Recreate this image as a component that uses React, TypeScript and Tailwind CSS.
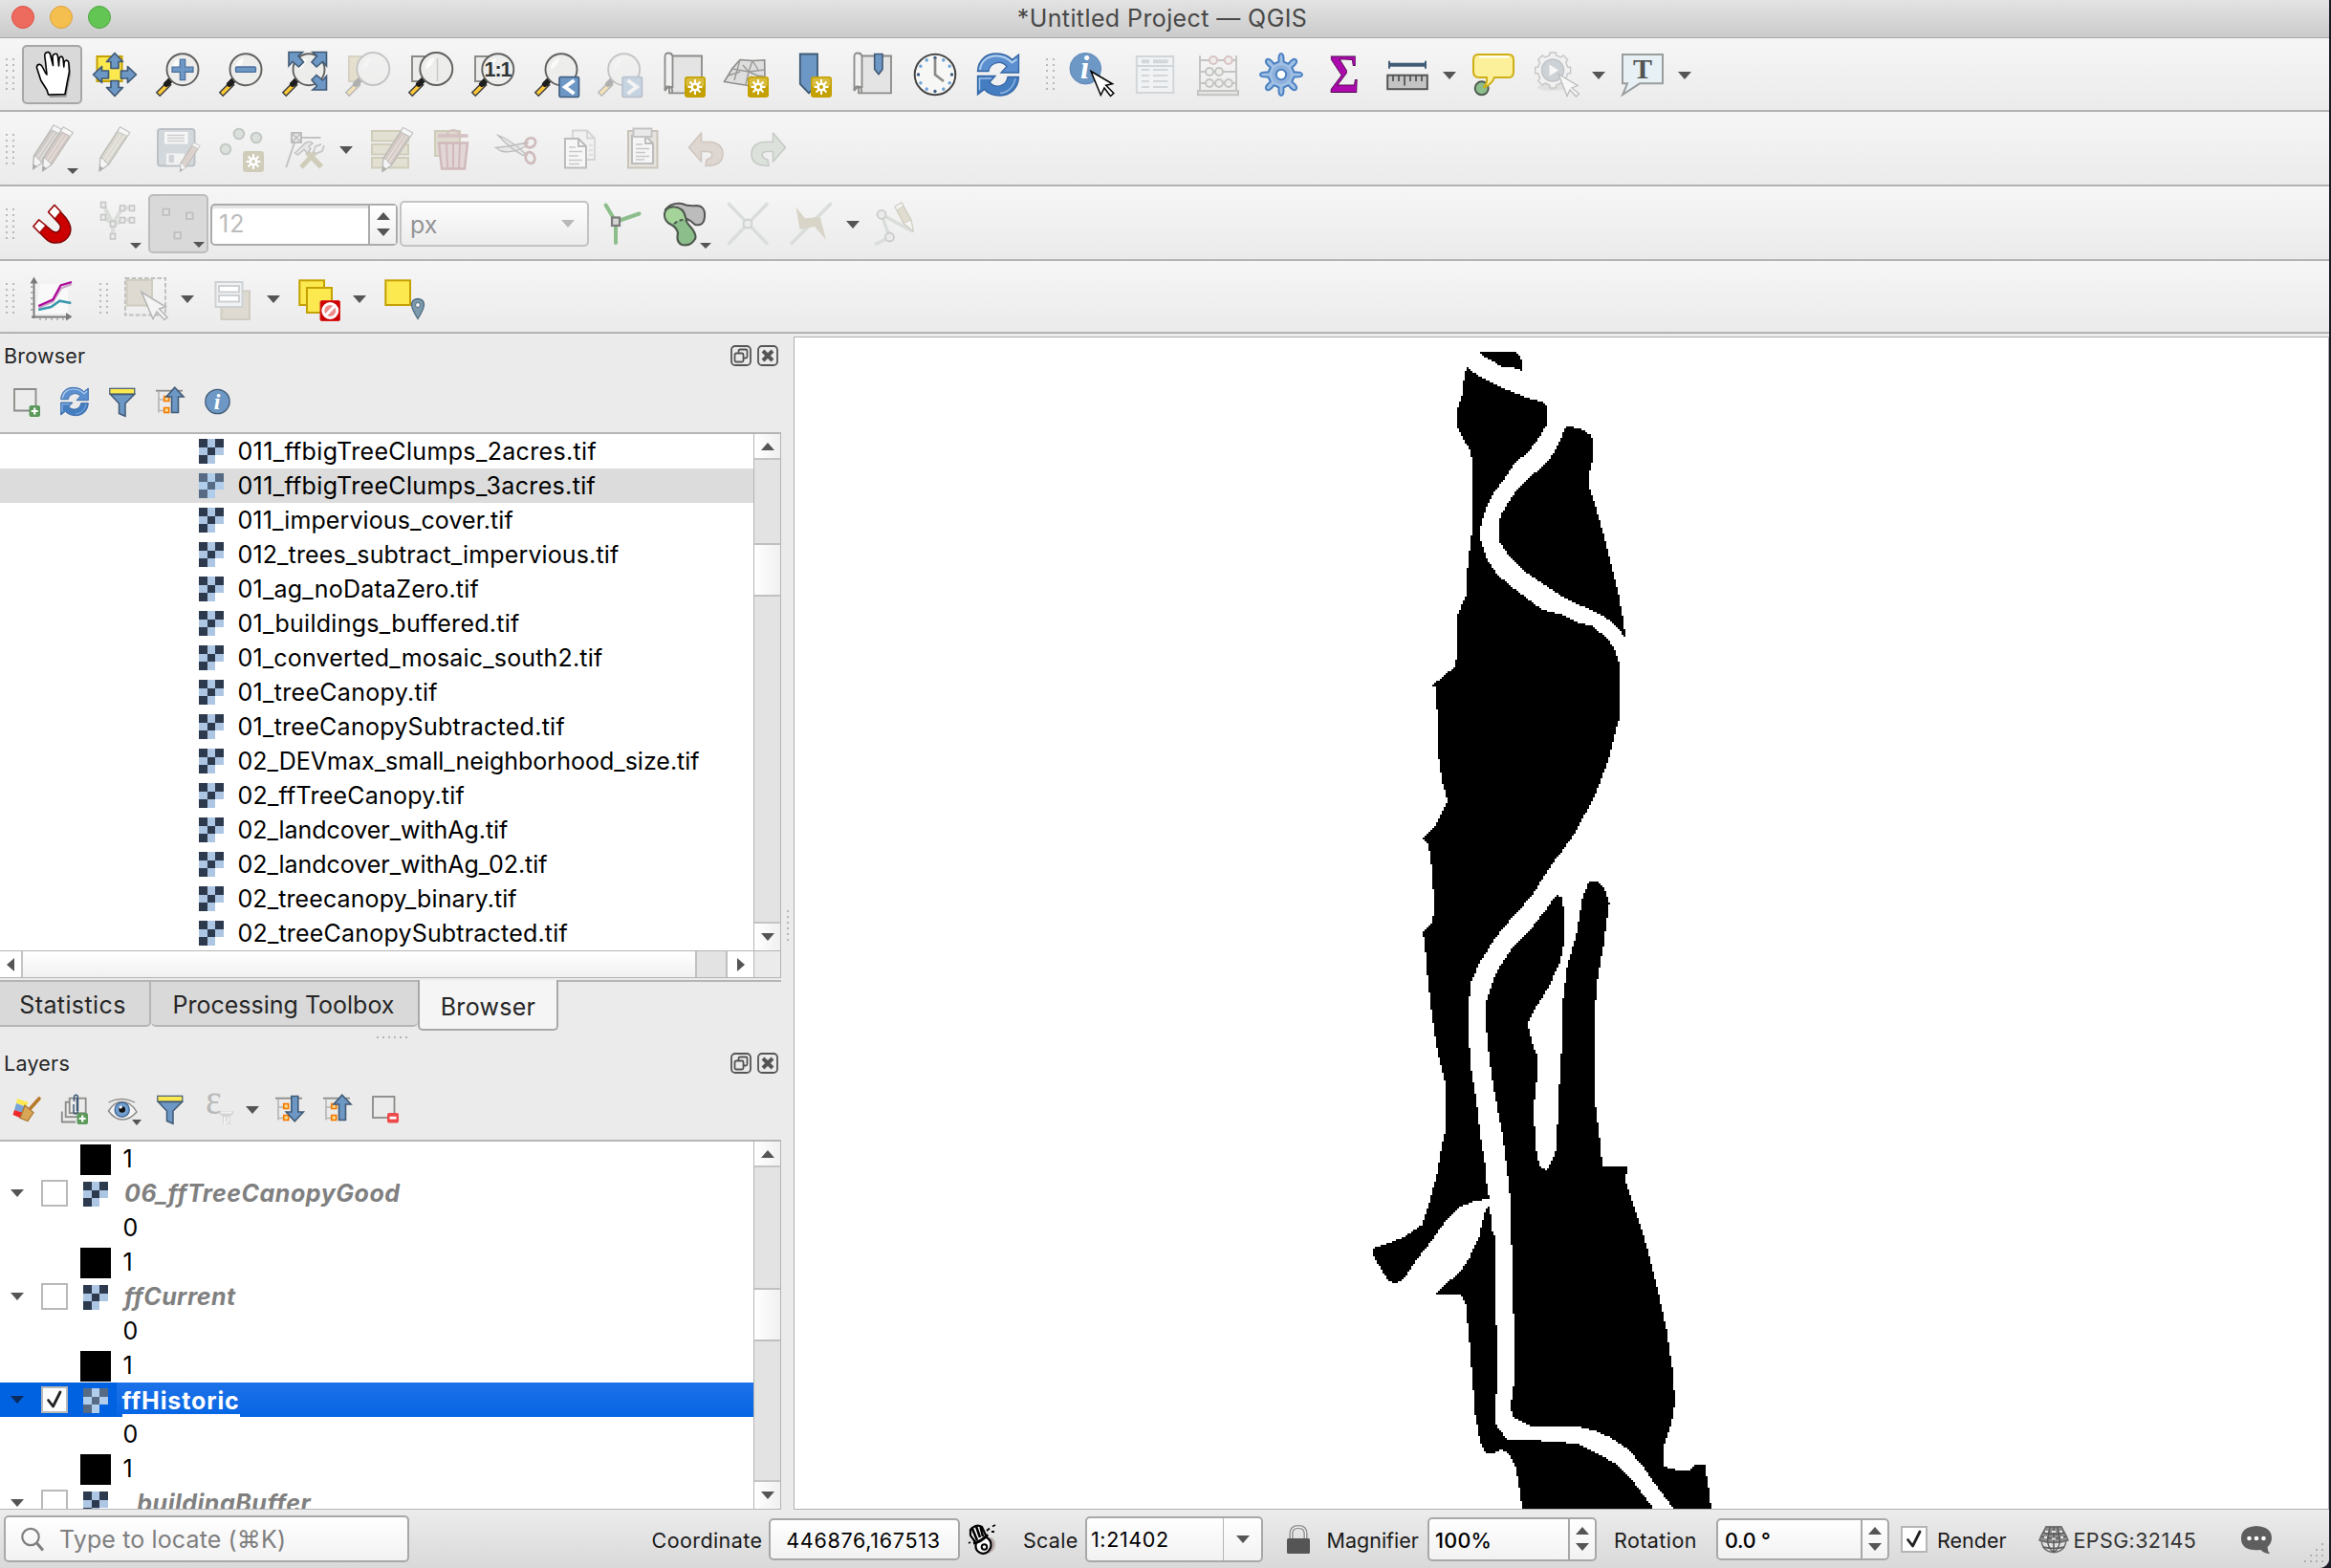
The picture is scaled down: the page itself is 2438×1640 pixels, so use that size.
import React from "react";

type Kids = { children?: React.ReactNode };

/* ---------- shared bits ---------- */

const Svg = ({ children, className = "" }: Kids & { className?: string }) => (
  <svg viewBox="0 0 48 48" className={`block h-12 w-12 shrink-0 overflow-visible ${className}`} fill="none">
    {children}
  </svg>
);

const Small = ({ children }: Kids) => (
  <svg viewBox="0 0 32 32" className="block h-8 w-8 shrink-0 overflow-visible" fill="none">
    {children}
  </svg>
);

const Down = ({ className = "border-t-[#555]" }: { className?: string }) => (
  <span className={`block h-0 w-0 border-x-[7.5px] border-t-[8.5px] border-x-transparent ${className}`} />
);
const Up = () => (
  <span className="block h-0 w-0 border-x-[7.5px] border-b-[8.5px] border-x-transparent border-b-[#555]" />
);

const Cell = ({ children }: Kids) => (
  <div className="relative flex h-[62px] w-[66px] shrink-0 items-center justify-center">{children}</div>
);

const Drop = () => (
  <div className="flex h-[62px] w-6 shrink-0 items-center justify-start pt-[2px] pl-[3.5px]">
    <Down />
  </div>
);

const Mini = () => (
  <span className="absolute right-[5px] bottom-[5px] block h-0 w-0 border-x-[6px] border-t-[6.5px] border-x-transparent border-t-[#555]" />
);

const Pressed = ({ children, dim }: Kids & { dim?: boolean }) => (
  <div className="flex w-[66px] shrink-0 justify-center">
    <div
      className={`relative flex h-[62px] w-[63px] items-center justify-center rounded-[5px] border-2 bg-[#d9d9d9] ${
        dim ? "border-[#bdbdbd]" : "border-[#a6a6a6]"
      }`}
    >
      {children}
    </div>
  </div>
);

const Handle = ({ className = "" }: { className?: string }) => (
  <div className={`flex shrink-0 gap-[5px] ${className}`}>
    {[0, 1].map((c) => (
      <div key={c} className="flex flex-col gap-[4.2px]">
        {[0, 1, 2, 3, 4, 5].map((r) => (
          <span key={r} className="block h-[2px] w-[2px] bg-[#b9b9b9]" />
        ))}
      </div>
    ))}
  </div>
);

const Bar = ({ children, className = "" }: Kids & { className?: string }) => (
  <div
    className={`flex shrink-0 items-center border-b-2 border-[#b2b2b2] bg-gradient-to-b from-[#f6f6f6] to-[#ebebeb] ${className}`}
  >
    {children}
  </div>
);

/* ---------- icon parts ---------- */

const Mag = ({ cx = 29, cy = 18.7, r = 16.5 }: { cx?: number; cy?: number; r?: number }) => (
  <>
    <path d="M15.5 32.5 L3 45" stroke="#3f3f3f" strokeWidth="6.4" />
    <path d="M13 35 L4 44" stroke="#fcc938" strokeWidth="3.4" />
    <path d="M17.5 28.5 L12 34" stroke="#1d1d1d" strokeWidth="6" strokeLinecap="round" />
    <circle cx={cx} cy={cy} r={r} fill="#ededec" stroke="#60605e" strokeWidth="1.9" />
    <path
      d={`M${cx - 11} ${cy} A 11.5 11.5 0 0 1 ${cx - 2} ${cy - 12} C ${cx - 3} ${cy - 6} ${cx - 6} ${cy - 2} ${cx - 11} ${cy} Z`}
      fill="#fff"
      opacity=".75"
    />
  </>
);

const Spark = () => (
  <g>
    <rect x="26" y="26" width="22" height="22" rx="3" fill="#c4a000" />
    <rect x="27.5" y="27.5" width="19" height="9" rx="2" fill="#d8bc3c" />
    <path d="M37 29 V45 M29.5 37 H44.5 M31.5 31.5 L42.5 42.5 M42.5 31.5 L31.5 42.5" stroke="#fff" strokeWidth="2" />
    <circle cx="37" cy="37" r="4.6" fill="#fff" />
    <circle cx="37" cy="37" r="2" fill="#c4a000" />
  </g>
);

const Cursor = ({ x, y }: { x: number; y: number }) => (
  <path
    transform={`translate(${x} ${y})`}
    d="M0 0 L22.5 13.3 L15.7 14.8 L23.8 23 L20.5 26 L14 17.5 L10.3 25 Z"
    fill="#fff"
    stroke="#000"
    strokeWidth="1.5"
  />
);

const Scroll = () => (
  <>
    <path d="M10 4.5 H44 V43.3 H10 Z" fill="#e4e4e4" stroke="#8b8b88" strokeWidth="1.8" />
    <path d="M5.5 5 Q5.5 1.5 9 1.5 Q13.5 1.5 13.5 6 V37 Q8 36 5.5 41 Z" fill="#f1f1f1" stroke="#8b8b88" strokeWidth="1.8" />
    <path d="M5.5 40 Q5.5 36 9.5 36.5 Q14 37 13 43" stroke="#8b8b88" strokeWidth="1.8" />
  </>
);

const RefreshArrows = ({ s = 1 }: { s?: number }) => (
  <g transform={`scale(${s})`}>
    <path
      d="M2.5 20.5 C3 9 11 2 22 2 C30 2 35 4.5 38.5 8.5 L45.5 3 V22 H27 L33 15.5 C30 12 26 10.5 21.5 12 C17 13.5 14.5 17 14 20.5 Z"
      fill="#5b8fcf"
      stroke="#3465a4"
      strokeWidth="1.3"
    />
    <path
      d="M45.5 26.5 C45 38 37 46 26 46 C18 46 12.5 43 9.5 39.5 L2.5 45 V25.5 H21 L15 32 C18 35.5 22 37 26.5 35.5 C31 34 33.5 31 34 26.5 Z"
      fill="#447dc0"
      stroke="#3465a4"
      strokeWidth="1.3"
    />
    <path d="M5 19 C6 10 13 4.5 22 4.5 C30 4.5 34 7 38.5 11.5 L43.5 8" stroke="#b4d0ef" strokeWidth="1.8" />
    <path d="M42 28 C40 37 34 42.5 26 43.5" stroke="#8fb6e3" strokeWidth="1.3" />
    <path d="M4.5 40 V28 H17" stroke="#9dc1ea" strokeWidth="1.5" />
  </g>
);

const Pencil = ({ dx = 0, dy = 0, k = 1, body = "#dcdad0" }: { dx?: number; dy?: number; k?: number; body?: string }) => (
  <g transform={`translate(${dx} ${dy}) scale(${k})`} strokeLinejoin="round">
    <path d="M29.7 1 L39.6 6.5 L17.5 40 L8 47 L9 33 Z" fill={body} stroke="#bdbdb8" strokeWidth="1.4" />
    <path d="M9 33 L12.5 34.5 L14 37 L17.5 40 L8 47 Z" fill="#f4f4f4" stroke="#b5b5b5" strokeWidth="1" />
    <path d="M8.8 41.5 L12 44 L8 47 Z" fill="#aaa" />
    <path d="M29.7 1 L39.6 6.5 L37 10.5 L27 5.5 Z" fill="#f6f6f6" stroke="#c4c4c4" strokeWidth="1" />
    <path d="M30 9 L12.5 35 M33.5 10 L15 37.5" stroke="#f1efec" strokeWidth="1.2" opacity=".7" />
  </g>
);

const Badge = ({ d }: { d: string }) => (
  <>
    <rect x="27" y="26.5" width="20.5" height="21" rx="1.5" fill="#6d97c4" stroke="#3d5a7d" strokeWidth="1.6" />
    <path d={d} stroke="#fff" strokeWidth="4" />
  </>
);

const Square = ({ x, y, s = 27, fill = "#fce94f", stroke = "#c4a000" }: { x: number; y: number; s?: number; fill?: string; stroke?: string }) => (
  <rect x={x} y={y} width={s} height={s} fill={fill} stroke={stroke} strokeWidth="2" />
);

const FourArrows = () => (
  <g fill="#6d97c4" stroke="#415a75" strokeWidth="1.7" strokeLinejoin="round">
    {[0, 90, 180, 270].map((a) => (
      <path key={a} transform={`rotate(${a} 24 24)`} d="M24 1.5 L32.5 10.5 H28 V17.5 H20 V10.5 H15.5 Z" />
    ))}
  </g>
);

const CornerArrow = ({ x, y, r }: { x: number; y: number; r: number }) => (
  <path
    transform={`translate(${x} ${y}) rotate(${r} 8 8)`}
    d="M0.5 0.5 H15 L10.5 4.5 L16 11 L11 16 L4.5 10.5 L0.5 15 Z"
    fill="#6d97c4"
    stroke="#415a75"
    strokeWidth="1.6"
  />
);

const GEAR8 =
  "M21.5 10.5 Q21 2 24 2 Q27 2 26.5 10.5 L31.5 12.8 Q36.5 6 39.5 8.5 Q42 11.5 35.2 16.5 L37.5 21.5 Q46 21 46 24 Q46 27 37.5 26.5 L35.2 31.5 Q42 36.5 39.5 39.5 Q36.5 42 31.5 35.2 L26.5 37.5 Q27 46 24 46 Q21 46 21.5 37.5 L16.5 35.2 Q11.5 42 8.5 39.5 Q6 36.5 12.8 31.5 L10.5 26.5 Q2 27 2 24 Q2 21 10.5 21.5 L12.8 16.5 Q6 11.5 8.5 8.5 Q11.5 6 16.5 12.8 Z";

/* ---------- toolbars ---------- */

const MainToolbar = () => (
  <Bar className="h-[77px]">
    <div className="w-[21px] pl-[6px]"><Handle /></div>
    <Pressed>
      <Svg>
        <path
          d="M20.6 46 L19 41 L12.7 31 L8.4 17.5 Q8.5 14.5 11.5 14.3 Q13.5 14.8 14.7 17.5 L17.4 23 L19 24 L17.6 11 L16.7 4 Q17 1 20.5 1 Q22.5 1.5 22.8 4 L25.5 14.5 L25 6 Q26 2.5 29.5 3.5 L30.5 6 L31.5 15 L32 7.5 Q34.5 4.5 36 8 L36.8 16 L37.2 11.5 Q40 8.5 41.8 12 L42.5 22 L40.5 32 L38 45.5 Z"
          transform="translate(1.5 2)" fill="#000" opacity=".3"
        />
        <path
          d="M20.6 45 L19 40 L12.7 30 L8.4 16.5 Q8.5 13.5 11.5 13.3 Q13.5 13.8 14.7 16.5 L17.4 22 L19 24 L17.6 11 L16.7 4 Q17 .5 20.5 .5 Q22.5 1 22.8 4 L25.5 14.5 L25 5 Q26 1.5 29.5 2.5 L30.5 5 L31.5 15 L32 6.5 Q34.5 3.5 36 7 L36.8 16 L37.2 10.5 Q40 7.5 41.8 11 L42.5 21 L40.5 31 L38 44.5 Z"
          fill="#fff" stroke="#000" strokeWidth="1.6" strokeLinejoin="round"
        />
      </Svg>
    </Pressed>
    <Cell><Svg><Square x={5.5} y={5} s={26} /><FourArrows /></Svg></Cell>
    <Cell>
      <Svg>
        <Mag />
        <path d="M26.3 8 H31.7 V16 H40 V21.4 H31.7 V29.7 H26.3 V21.4 H18 V16 H26.3 Z" fill="#6d97c4" stroke="#4a6f9c" strokeWidth="1.2" />
      </Svg>
    </Cell>
    <Cell><Svg><Mag /><rect x="18.5" y="16" width="21" height="5.4" rx="1" fill="#6d97c4" stroke="#4a6f9c" strokeWidth="1.3" /></Svg></Cell>
    <Cell>
      <Svg><Mag /><CornerArrow x={7.5} y={0} r={0} /><CornerArrow x={32} y={0} r={90} /><CornerArrow x={32} y={24.5} r={180} /></Svg>
    </Cell>
    <Cell>
      <Svg className="opacity-30"><Square x={5} y={5} s={26} fill="#c9b67c" stroke="#9a8b60" /><Mag cx={30.3} cy={18} r={17} /></Svg>
    </Cell>
    <Cell>
      <Svg><Square x={5} y={5} s={26} fill="#ececea" stroke="#8b8b88" /><Mag cx={30.3} cy={18} r={17} /><path d="M31.5 7 V31" stroke="#c9c9c9" strokeWidth="1.5" /></Svg>
    </Cell>
    <Cell>
      <Svg>
        <Square x={5} y={5} s={26} fill="#ececea" stroke="#8b8b88" /><Mag cx={28.8} cy={18.7} r={16.5} />
        <text x="28.5" y="26" textAnchor="middle" fontFamily="Liberation Sans" fontWeight="700" fontSize="21.5" letterSpacing="-1" fill="#2e3436">1:1</text>
      </Svg>
    </Cell>
    <Cell><Svg><Mag /><Badge d="M42.5 30 L33 37 L42.5 44" /></Svg></Cell>
    <Cell><Svg className="opacity-30"><Mag cx={28.6} /><Badge d="M32.5 30 L42 37 L32.5 44" /></Svg></Cell>
    <Cell><Svg><Scroll /><Spark /></Svg></Cell>
    <Cell>
      <Svg>
        <path d="M18 8.5 L31 9.5 L43.7 8.8 L44 31 L29.8 36 L1.5 31.5 L10 17.5 Z" fill="#dedede" stroke="#8b8b88" strokeWidth="1.6" />
        <path d="M18 8.5 L12 30 M10 18 L27 21 L44 19 M31 9.5 L27 21 L24 34 M6 25 L18 21 M27 21 L36 25 L44 26 M27 21 L21 14 M36 25 L34 34 M31 9.5 L37 19" stroke="#9a9a98" strokeWidth="1.4" />
        <Spark />
      </Svg>
    </Cell>
    <Cell><Svg><path d="M14.8 2.5 H33 V34 L24 43.5 L14.8 34 Z" fill="#6d97c4" stroke="#415a75" strokeWidth="1.8" /><Spark /></Svg></Cell>
    <Cell><Svg><Scroll /><path d="M26.7 2.5 H35 V18.5 L31 23.7 L26.7 18.5 Z" fill="#6d97c4" stroke="#415a75" strokeWidth="1.6" /></Svg></Cell>
    <Cell>
      <Svg>
        <circle cx="24" cy="24" r="21.3" fill="#f7f7f5" stroke="#454545" strokeWidth="2" />
        {[0, 30, 60, 90, 120, 150, 180, 210, 240, 270, 300, 330].map((a) => (
          <circle key={a} transform={`rotate(${a} 24 24)`} cx="24" cy="6.5" r="1.7" fill={a % 90 ? "#6fa3d8" : "#3c5c85"} />
        ))}
        <path d="M24 7.5 V24 L33 31" stroke="#8b8b88" strokeWidth="2.7" />
      </Svg>
    </Cell>
    <Cell><Svg><RefreshArrows /></Svg></Cell>
    <div className="w-8 pl-[17px]"><Handle /></div>
    <Cell>
      <Svg>
        <circle cx="17.3" cy="17.7" r="16.3" fill="#6d97c4" stroke="#5d87b8" strokeWidth="1" />
        <text x="16.5" y="28" textAnchor="middle" fontFamily="Liberation Serif" fontStyle="italic" fontWeight="700" fontSize="33" fill="#fff">i</text>
        <Cursor x={23} y={20.5} />
      </Svg>
    </Cell>
    <Cell>
      <Svg>
        <rect x="4.8" y="5" width="38.5" height="38" fill="#f0f2f3" stroke="#d0d6da" strokeWidth="2" />
        <path d="M5 15 H43" stroke="#d0d6da" strokeWidth="2" />
        <path d="M10 10.3 H18 M22 10.3 H37.5" stroke="#d3d7da" strokeWidth="4" />
        <path d="M10 19 H18 M22 19 H37.5 M10 25 H18 M22 25 H37.5 M10 31 H18 M22 31 H37.5 M10 37 H18 M22 37 H37.5" stroke="#d3d7da" strokeWidth="1.9" />
      </Svg>
    </Cell>
    <Cell>
      <Svg>
        <g stroke="#c4c4c2" strokeWidth="2">
          <path d="M5 4.3 V41 M43 4.3 V41 M5 9 H43 M5 21 H43 M5 33 H43" />
          <rect x="3" y="41" width="42" height="4.2" fill="#e6e6e4" />
          <circle cx="19" cy="9" r="4" fill="#f2eded" stroke="#d8c4c4" /><circle cx="34.8" cy="9" r="4" fill="#f2eded" stroke="#d8c4c4" />
          <circle cx="15" cy="21" r="4" fill="#ecefea" /><circle cx="25" cy="21" r="4" fill="#ecefea" />
          <circle cx="15" cy="33" r="4" fill="#ededed" /><circle cx="25" cy="33" r="4" fill="#ededed" /><circle cx="35" cy="33" r="4" fill="#ededed" />
        </g>
      </Svg>
    </Cell>
    <Cell>
      <Svg>
        <path d={GEAR8} fill="#9fc0e4" stroke="#4a80c2" strokeWidth="2" strokeLinejoin="round" />
        <circle cx="24" cy="24" r="10" fill="#8fb0da" />
        <circle cx="24" cy="24" r="5.2" fill="#fff" stroke="#4a80c2" strokeWidth="2" />
      </Svg>
    </Cell>
    <Cell>
      <Svg>
        <text x="24" y="43" textAnchor="middle" fontFamily="Liberation Serif" fontWeight="700" fontSize="57" textLength="31" lengthAdjust="spacingAndGlyphs" fill="#ad0aad" stroke="#4b0a4b" strokeWidth=".9">Σ</text>
      </Svg>
    </Cell>
    <Cell>
      <Svg>
        <path d="M5 13.7 H43" stroke="#415a75" strokeWidth="4" /><path d="M5 9.8 V17.8 M43 9.8 V17.8" stroke="#415a75" strokeWidth="2" />
        <rect x="3.2" y="24.7" width="41.6" height="14.5" fill="#c4c4c4" stroke="#555" strokeWidth="2" />
        <path d="M9 25 V31 M15 25 V31 M21 25 V35.5 M27 25 V31 M33 25 V31 M39 25 V31" stroke="#555" strokeWidth="1.8" />
      </Svg>
    </Cell>
    <Drop />
    <Cell>
      <Svg>
        <circle cx="11.7" cy="38.3" r="7" fill="#8cbe8c" stroke="#4f5a4f" strokeWidth="2" />
        <path d="M8 3 H40 Q45 3 45 9 V21 Q45 27 40 27 H25 Q22 35 13.5 37.5 Q18 33 17 27 H9 Q3 27 3 21 V9 Q3 3 8 3 Z" fill="#fcf09b" stroke="#cfae14" strokeWidth="2" />
        <path d="M9 5.5 H40" stroke="#fff" strokeWidth="2" />
      </Svg>
    </Cell>
    <Cell>
      <Svg>
        <ellipse cx="19" cy="37.5" rx="15" ry="3.5" fill="#e0e0e0" />
        <path
          transform="translate(0.5 -0.2) scale(.82)"
          d="M20 5 V1.5 H28 V5 L34 7.5 L37.5 5 L43 10.5 L40.5 14 L43 20 H46.5 V28 H43 L40.5 34 L43 37.5 L37.5 43 L34 40.5 L28 43 V46.5 H20 V43 L14 40.5 L10.5 43 L5 37.5 L7.5 34 L5 28 H1.5 V20 H5 L7.5 14 L5 10.5 L10.5 5 L14 7.5 Z"
          fill="#f1f1f1" stroke="#c6c6c6" strokeWidth="1.7" strokeLinejoin="round"
        />
        <circle cx="20" cy="19.5" r="11.5" fill="#cdd2d6" stroke="#c0c4c8" strokeWidth="1.5" />
        <path d="M16.5 13.5 L26 19.5 L16.5 25.5 Z" fill="#f7f7f7" />
        <path transform="translate(26 23.5)" d="M0 0 L20 12 L14 14.5 L21.5 20.5 L18.5 23.5 L12 16.5 L9 23 Z" fill="#f7f7f7" stroke="#bcbcbc" strokeWidth="1.3" />
      </Svg>
    </Cell>
    <Drop />
    <Cell>
      <Svg>
        <path d="M3 3 H45 V33.3 H21 L3.2 45 L8 33.3 H3 Z" fill="#e6f0f5" stroke="#9a9d9d" strokeWidth="2" />
        <text x="24" y="28" textAnchor="middle" fontFamily="Liberation Serif" fontWeight="700" fontSize="30" fill="#555">T</text>
      </Svg>
    </Cell>
    <Drop />
  </Bar>
);

const UNDO =
  "M6.5 22.3 L19.5 7 V16.5 H28 C37 16.5 42 22 42 29 C42 37 36 41.5 24 41.5 L25 35 C33 33 32 26.5 26 26.5 H19.5 V37 Z";

const EditToolbar = () => (
  <Bar className="h-[78px] pt-[2px]">
    <div className="w-[21px] pl-[6px]"><Handle /></div>
    <Cell><Svg><Pencil dx={-3.5} dy={-2} body="#cfccca" /><Pencil dx={6.5} body="#d6cac6" /></Svg><Mini /></Cell>
    <Cell><Svg><Pencil /></Svg></Cell>
    <Cell>
      <Svg>
        <rect x="3" y="3" width="38.5" height="38.5" rx="3" fill="#d3d8dd" stroke="#bcc1c6" strokeWidth="2" />
        <rect x="10" y="6" width="24.5" height="12.5" fill="#f7f7f7" /><path d="M13 9.5 H31 M13 12.5 H31 M13 15.5 H31" stroke="#ccc" strokeWidth="1.3" />
        <rect x="12" y="28.5" width="19" height="12" fill="#f2f2f2" /><rect x="14.5" y="30" width="5.5" height="8" fill="#cfd3d8" />
        <Pencil dx={21} dy={16.5} k={0.66} body="#d6cac6" />
      </Svg>
    </Cell>
    <Cell>
      <Svg>
        <g fill="#dce0dc" stroke="#c3c8c3" strokeWidth="2"><circle cx="21.9" cy="8" r="5.3" /><circle cx="40" cy="12" r="5.3" /><circle cx="8" cy="24" r="5.3" /></g>
        <g className="[&_rect]:fill-[#cfccb9] [&_circle:last-child]:fill-[#cfccb9]"><Spark /></g>
      </Svg>
    </Cell>
    <Cell>
      <Svg>
        <path d="M21 12 H41.5 M14 17 L5.3 43" stroke="#c3c3c3" strokeWidth="2" />
        <rect x="11" y="7" width="10" height="10" fill="#e8e8e8" stroke="#bdbdbd" strokeWidth="2" /><path d="M12 8 L20 16 M20 8 L12 16" stroke="#bdbdbd" strokeWidth="1.5" />
        <path d="M21 43 L36 27" stroke="#cfccb9" strokeWidth="5" /><path d="M33 29 L36 21 L42 19 M36 29 L43 26 L45 20" stroke="#cacaca" strokeWidth="2" />
        <path d="M27 27 L42 42.5" stroke="#cfccb9" strokeWidth="5.5" /><path d="M14.5 28 L26 17 Q31 15 33 18 L29 21 L31 24 L27 28 L24 24.5 L17.500 30 Z" fill="#e6e6e6" stroke="#c3c3c3" strokeWidth="1.5" />
      </Svg>
    </Cell>
    <Drop />
    <Cell>
      <Svg>
        <g fill="#e2dfd3" stroke="#cfccb9" strokeWidth="2"><rect x="5" y="5" width="38" height="10.5" /><rect x="5" y="19" width="38" height="10.5" /><rect x="5" y="33" width="38" height="10.5" /></g>
        <Pencil dx={8} dy={0.5} body="#d6cac6" />
      </Svg>
    </Cell>
    <Cell>
      <Svg>
        <Square x={5} y={5} s={26} fill="#dedad0" stroke="#cfccb9" />
        <path d="M8 10 H39.5" stroke="#d5c0c2" strokeWidth="3.6" /><path d="M18 9 Q18 4 24 4 Q30 4 30 9" stroke="#d5c0c2" strokeWidth="2" />
        <path d="M9 17.5 H39 L36 44.5 H12 Z" fill="#e3d6d7" stroke="#d0b9bb" strokeWidth="2.4" />
        <path d="M17 18 L18 44 M24 18 V44 M31 18 L30 44" stroke="#d0b9bb" strokeWidth="2" />
      </Svg>
    </Cell>
    <Cell>
      <Svg>
        <path d="M5 9.5 Q18 14 35 30 L30 30 Q16 22 5 9.5 Z M2.5 22.5 Q18 21 36 17 L34 21 Q20 29 8 26 Z" fill="#e6e6e6" stroke="#bdbdbd" strokeWidth="1.3" />
        <ellipse cx="38.8" cy="17.3" rx="5.5" ry="4.7" stroke="#d0bcbc" strokeWidth="2.8" transform="rotate(-35 38.8 17.3)" />
        <ellipse cx="38.5" cy="33" rx="4.7" ry="6" stroke="#d0bcbc" strokeWidth="2.8" transform="rotate(-20 38.5 33)" />
      </Svg>
    </Cell>
    <Cell>
      <Svg>
        <path d="M17 4.5 H32 L40 12.5 V35 H17 Z" fill="#f1f1f1" stroke="#d4d4d4" strokeWidth="1.8" /><path d="M32 4.5 V12.5 H40" stroke="#d4d4d4" strokeWidth="1.8" /><path d="M34 20 H38 M34 25 H38 M34 30 H38" stroke="#d8d8d8" strokeWidth="1.5" />
        <path d="M9 13 H23 L31 21 V43.5 H9 Z" fill="#f7f7f7" stroke="#bcbcbc" strokeWidth="2" /><path d="M23 13 V21 H31" stroke="#bcbcbc" strokeWidth="2" />
        <path d="M13 22 H20 M13 26.5 H27 M13 31 H23 M13 35.5 H27 M13 39.5 H24" stroke="#c8c8c8" strokeWidth="1.5" />
      </Svg>
    </Cell>
    <Cell>
      <Svg>
        <rect x="9" y="5" width="30.5" height="38.5" fill="#e6e3de" stroke="#c9c4ba" strokeWidth="2" />
        <path d="M13 10 H27 L35 18 V39 H13 Z" fill="#f5f5f5" stroke="#bcbcbc" strokeWidth="2" /><path d="M27 11 V18 H35" stroke="#bcbcbc" strokeWidth="2" />
        <rect x="14.5" y="2.5" width="19" height="8.5" fill="#e9e9e9" stroke="#c4c4c4" strokeWidth="2" />
        <path d="M17 19 H24 M17 23.5 H31 M17 27.5 H27 M17 31.5 H31 M17 35 H26" stroke="#c8c8c8" strokeWidth="1.5" />
      </Svg>
    </Cell>
    <Cell><Svg><path d={UNDO} fill="#ded6d0" stroke="#cfc6bf" strokeWidth="1.6" strokeLinejoin="round" /></Svg></Cell>
    <Cell><Svg className="-scale-x-100"><path d={UNDO} fill="#dce1dc" stroke="#c6cbc6" strokeWidth="1.6" strokeLinejoin="round" /></Svg></Cell>
  </Bar>
);

const SnapToolbar = () => (
  <Bar className="h-[78px] pt-[2px]">
    <div className="w-[21px] pl-[6px]"><Handle /></div>
    <Cell>
      <Svg>
        <path d="M5 26.7 L10.7 20 L24 31 Q29 35 32 31 Q35 27 31 23 L20.6 11.7 L27 4.5 L39 18 Q46 27 43 35 Q38 45 27 44 Q22 44 17 39 Z" fill="#cc0000" stroke="#7e0404" strokeWidth="1.5" strokeLinejoin="round" />
        <path d="M27 4.5 L33.5 11.5 L27.5 19 L20.6 11.7 Z M5 26.7 L10.7 20 L18 26 L11.5 33.5 Z" fill="#fff" stroke="#a01010" strokeWidth="1.5" strokeLinejoin="round" />
      </Svg>
    </Cell>
    <Cell>
      <Svg>
        <path d="M12 4 L22 24 V37 M12 17 L22 24 M22 24 L32 7.5 M24 25 L32 20 M33 7.5 H42 M33 20 H42" stroke="#dadeda" strokeWidth="4" />
        <g fill="#ececec" stroke="#c6c6c6" strokeWidth="1.6">
          <rect x="9.5" y="1.5" width="5" height="5.5" /><rect x="9.5" y="14.5" width="5" height="5.5" /><rect x="29.5" y="5" width="5" height="5.5" /><rect x="39.5" y="5" width="5" height="5.5" /><rect x="29.5" y="17.5" width="5" height="5.5" /><rect x="39.5" y="17.5" width="5" height="5.5" /><rect x="19.5" y="21.5" width="5" height="5.5" /><rect x="19.5" y="34.5" width="5" height="5.5" />
        </g>
      </Svg>
      <Mini />
    </Cell>
    <Pressed dim>
      <Svg>
        <g stroke="#bfbfbf" strokeWidth="1.8" fill="#dedede"><rect x="8.5" y="8.5" width="6.5" height="6.5" /><rect x="33" y="12.5" width="6.5" height="6.5" /><rect x="20.5" y="33" width="6.5" height="6.5" /></g>
      </Svg>
      <span className="absolute right-[1.5px] bottom-[4px] block h-0 w-0 border-x-[6px] border-t-[6.5px] border-x-transparent border-t-[#555]" />
    </Pressed>
    <div className="mt-px ml-px flex h-[44px] w-[196px] shrink-0 rounded-[5px] border-2 border-[#ababab] bg-white shadow-[inset_0_3px_0_#e4e4e4]">
      <div className="flex flex-1 items-center pl-[7px] text-[25px] tracking-[1.2px] text-[#bcbcbc]">12</div>
      <div className="flex w-[29px] flex-col items-center justify-center gap-[9px] border-l-2 border-[#ababab] bg-gradient-to-b from-white to-[#efefef]"><Up /><Down /></div>
    </div>
    <div className="ml-[2px] flex h-[48px] w-[198px] shrink-0 items-center justify-between rounded-[5px] border-2 border-[#c3c3c3] bg-gradient-to-b from-[#fdfdfd] to-[#ececec] pr-[13px] pl-[9px] text-[25px] text-[#939393]">
      <span className="pt-[3px]">px</span>
      <Down className="border-t-[#b9b9b9]" />
    </div>
    <div className="w-px" />
    <Cell>
      <Svg>
        <path d="M7.6 4.5 L18 22 L42.5 13.5 M18 22 V44" stroke="#8cbe8c" strokeWidth="4" strokeLinecap="round" />
        <rect x="14" y="17.5" width="8" height="8.5" fill="#d5d5d5" stroke="#7b7b7b" strokeWidth="2.2" />
      </Svg>
    </Cell>
    <Cell>
      <Svg>
        <path d="M4 9 Q10 1.5 21 3 Q28 6 36 5 Q46 5 45 17 Q44 27 35 25 Q30 20 24 18 Q22 8 14 7 Q8 7 4 12 Z" fill="#bcbcbc" stroke="#555" strokeWidth="2" />
        <path d="M3 14 Q4 6 13 6.5 Q23 7 25 17 Q25 22 30 27 Q37 35 35 40 Q30 48 21 46 Q15 43 17 34 Q16 28 10 25 Q3 22 3 14 Z" fill="#8cbe8c" stroke="#4f5a4f" strokeWidth="2.2" />
        <path d="M4 14 Q5 7.5 13 7.5 Q22 8 23.5 17 L25 20 Q18 19 12 24 Q4 22 4 14 Z" fill="#a4d49a" />
        <path d="M13 24 Q19 19 28 19.5" stroke="#4f5a4f" strokeWidth="2" strokeDasharray="4 2.5" />
      </Svg>
      <Mini />
    </Cell>
    <Cell>
      <Svg><path d="M4.5 3.5 L44 44.5 M44 3.5 L4.5 44.5" stroke="#dadeda" strokeWidth="3.6" strokeLinecap="round" /><circle cx="24" cy="24" r="4.5" fill="#ebebeb" stroke="#cdd1cd" strokeWidth="1.8" /></Svg>
    </Cell>
    <Cell>
      <Svg><path d="M44.5 3.5 L4 44.5" stroke="#dadeda" strokeWidth="3.6" strokeLinecap="round" /><path d="M8.5 6.7 L18 18.3 L33.8 17 L40 41 L28 27 L12.5 30 Z" fill="#d8d5c8" /></Svg>
    </Cell>
    <Drop />
    <Cell>
      <Svg className="-translate-x-px">
        <path d="M9 14.3 L17.4 38 L3.5 45 M9 14.3 L40.7 31.5" stroke="#dadeda" strokeWidth="3.6" strokeLinecap="round" />
        <circle cx="9" cy="14.3" r="4.5" fill="#ebebeb" stroke="#c9cdc9" strokeWidth="1.8" /><circle cx="17.4" cy="38" r="4.5" fill="#ebebeb" stroke="#c9cdc9" strokeWidth="1.8" />
        <path d="M23 6 L30 2 L40 20 L42 31.5 L32 23.5 Z" fill="#e0ddd0" stroke="#cfcdc2" strokeWidth="1.3" /><path d="M23 6 L30 2 L32 5.5 L25 10 Z M32 23.5 L40 20 L42 31.5 Z" fill="#f4f4f2" stroke="#cfcdc2" strokeWidth="1" />
      </Svg>
    </Cell>
  </Bar>
);

const SelectToolbar = () => (
  <Bar className="h-[76px] pt-[4px]">
    <div className="w-[21px] pl-[6px]"><Handle /></div>
    <Cell>
      <Svg>
        <path d="M12 9 H34 L41 14 V40 H7 Z" fill="#f9f9f9" />
        <path d="M5.5 45 V6 M3 43.5 H42" stroke="#7b7b7b" strokeWidth="1.9" />
        <path d="M5.5 1.5 L9.5 8.5 H1.5 Z M45.5 43.3 L39 39 V47.5 Z" fill="#7b7b7b" />
        <path d="M2 12 H5 M2 18 H5 M2 24 H5 M2 30 H5 M2 36 H5 M12 44 V47 M18 44 V47 M24 44 V47 M30 44 V47 M36 44 V47" stroke="#a0a0a0" strokeWidth="1.3" />
        <path d="M10.3 34 L25.4 27.5 L34 13.5 L45 9" stroke="#c9a3c6" strokeWidth="2" /><path d="M10.3 32 L25.4 25.3 L33.5 10.5 L45 7" stroke="#ad0a9a" strokeWidth="2.3" />
        <path d="M10.3 36 L23.4 33 L32.5 26.7 L44.3 29" stroke="#3a98ae" strokeWidth="2.5" />
      </Svg>
    </Cell>
    <div className="w-8 pl-[17px]"><Handle /></div>
    <Cell>
      <Svg>
        <rect x="3" y="3" width="42" height="38.5" stroke="#c0c0c0" strokeWidth="2" strokeDasharray="4.5 2.2" />
        <Square x={4.5} y={5} s={26.5} fill="#dedad2" stroke="#cfccc0" />
        <path transform="translate(20 17.5)" d="M0 0 L25.5 15.5 L18.5 17.5 L27 26.5 L24 29 L16 20.5 L12 28 Z" fill="#f4f4f4" stroke="#b5b5b5" strokeWidth="1.5" />
      </Svg>
    </Cell>
    <Drop />
    <Cell>
      <Svg>
        <Square x={13.5} y={16.5} s={29.5} fill="#dedad2" stroke="#cfccc0" />
        <rect x="7.5" y="7" width="28" height="26" fill="#f1f2f3" stroke="#cdd1d4" strokeWidth="2" />
        <rect x="11" y="11" width="21" height="6.5" stroke="#cdd1d4" strokeWidth="2" fill="#fff" /><rect x="11" y="21" width="21" height="6.5" stroke="#cdd1d4" strokeWidth="2" fill="#fff" />
      </Svg>
    </Cell>
    <Drop />
    <Cell>
      <Svg>
        <Square x={5.3} y={5.3} s={25.7} /><Square x={13} y={13} s={26} />
        <rect x="27" y="26.5" width="20.5" height="21" rx="1.5" fill="#cc0000" stroke="#dd2222" />
        <circle cx="37.3" cy="37" r="7.5" fill="#ee8d8d" stroke="#fff" strokeWidth="3" /><path d="M42 32 L32.5 42" stroke="#fff" strokeWidth="3" />
      </Svg>
    </Cell>
    <Drop />
    <Cell>
      <Svg>
        <Square x={5.3} y={5.3} s={25.7} />
        <path d="M39 24.5 Q45.5 25 45.5 31 Q45 36 39 45.5 Q33 36 32.5 31 Q32.5 25 39 24.5 Z" fill="#7c99ad" stroke="#4f6b80" strokeWidth="1.3" />
        <circle cx="39" cy="31" r="2.5" fill="#f2f2f2" stroke="#4f6b80" strokeWidth="1" />
      </Svg>
    </Cell>
  </Bar>
);

/* ---------- dock pieces ---------- */

const DockHeader = ({ title, track }: { title: string; track: string }) => (
  <div className="flex h-[45px] shrink-0 items-center justify-between pr-[3px] pl-[4px]">
    <span className={`pt-px text-[21.5px] text-[#262626] ${track}`}>{title}</span>
    <div className="flex gap-[6px]">
      <svg viewBox="0 0 22 22" className="h-[22px] w-[22px]" fill="none" stroke="#555" strokeWidth="1.8">
        <rect x="1" y="1" width="20" height="20" rx="4" />
        <rect x="8.5" y="4.5" width="9" height="9" rx="1.5" />
        <rect x="4.5" y="8.5" width="9" height="9" rx="1.5" fill="#ebebeb" />
      </svg>
      <svg viewBox="0 0 22 22" className="h-[22px] w-[22px]" fill="none" stroke="#555" strokeWidth="1.8">
        <rect x="1" y="1" width="20" height="20" rx="4" />
        <path d="M6 6 L16 16 M16 6 L6 16" strokeWidth="4" />
      </svg>
    </div>
  </div>
);

const Raster = ({ faded }: { faded?: boolean }) => (
  <svg viewBox="0 0 27 27" className="block h-[26px] w-[26px] shrink-0" shapeRendering="crispEdges">
    <path d="M0 0 H27 V18 H18 V27 H0 Z" fill={faded ? "#b0cdec" : "#adc6e4"} />
    <path d="M0 0 H9 V9 H0 Z M18 0 H27 V9 H18 Z M9 9 H18 V18 H9 Z M0 18 H9 V27 H0 Z" fill={faded ? "#576c84" : "#2d3a4e"} />
  </svg>
);

const Refresh32 = () => <Small><RefreshArrows s={0.667} /></Small>;

const Funnel = () => (
  <Small>
    <path d="M3.5 8.5 L12.5 18 V28.5 L19 31.3 V18 L28.5 8.5 Z" fill="#6d97c4" stroke="#415a75" strokeWidth="1.5" />
    <rect x="2.8" y="2.3" width="26" height="5.7" fill="#fce94f" stroke="#415a75" strokeWidth="1.2" />
  </Small>
);

const TreeArrow = ({ up }: { up?: boolean }) => (
  <Small>
    <path d="M1 4.7 H29" stroke="#8b8b88" strokeWidth="1.8" />
    <path d="M4 5 V27.5 M4 14 H10 M4 25.5 H10" stroke="#b5b5b3" strokeWidth="1.6" />
    <rect x="9.7" y="10.5" width="5" height="5" fill="#fcd98a" stroke="#f57900" strokeWidth="1.6" />
    <rect x="9.7" y="22.5" width="5" height="5" fill="#fcd98a" stroke="#f57900" strokeWidth="1.6" />
    {up ? (
      <path d="M20.8 1.3 L30 11 H24.5 V27.5 H17.5 V11 H12 Z" fill="#6d97c4" stroke="#415a75" strokeWidth="1.6" />
    ) : (
      <path d="M21.3 28.7 L30.3 19 H24.8 V2.5 H17.8 V19 H12.3 Z" fill="#6d97c4" stroke="#415a75" strokeWidth="1.6" />
    )}
  </Small>
);

const VScroll = ({ top, thumb, rest, down }: { top: string; thumb: string; rest: string; down: string }) => (
  <div className="flex w-[29px] shrink-0 flex-col border-x border-[#b5b5b5]">
    <div className="flex h-[27px] items-center justify-center border-b-2 border-[#c4c4c4] bg-gradient-to-r from-white to-[#f0f0f0]"><Up /></div>
    <div className={`bg-[#e3e3e3] ${top}`} />
    <div className={`border-y-2 border-[#c0c0c0] bg-gradient-to-r from-white to-[#f0f0f0] ${thumb}`} />
    <div className={`bg-[#e3e3e3] ${rest}`} />
    <div className={`flex items-center justify-center border-t-2 border-[#c4c4c4] bg-gradient-to-r from-white to-[#f0f0f0] ${down}`}><Down /></div>
  </div>
);

const FILES: [string, string][] = [
  ["011_ffbigTreeClumps_2acres.tif", "tracking-[0.345px]"],
  ["011_ffbigTreeClumps_3acres.tif", "tracking-[0.345px]"],
  ["011_impervious_cover.tif", "tracking-[0.1px]"],
  ["012_trees_subtract_impervious.tif", "tracking-[0.13px]"],
  ["01_ag_noDataZero.tif", "tracking-[0.22px]"],
  ["01_buildings_buffered.tif", "tracking-[0.27px]"],
  ["01_converted_mosaic_south2.tif", "tracking-[0.17px]"],
  ["01_treeCanopy.tif", "tracking-[0.3px]"],
  ["01_treeCanopySubtracted.tif", "tracking-[0.27px]"],
  ["02_DEVmax_small_neighborhood_size.tif", "tracking-[0px]"],
  ["02_ffTreeCanopy.tif", "tracking-[0.22px]"],
  ["02_landcover_withAg.tif", "tracking-[-0.05px]"],
  ["02_landcover_withAg_02.tif", "tracking-[-0.05px]"],
  ["02_treecanopy_binary.tif", "tracking-[0.1px]"],
  ["02_treeCanopySubtracted.tif", "tracking-[0.19px]"],
];

const BrowserDock = () => (
  <>
    <DockHeader title="Browser" track="tracking-[0.2px]" />
    <div className="flex h-[58px] shrink-0 items-start gap-[18px] pt-[10px] pl-[12px]">
      <Small>
        <path d="M3 3 H25.5 V25.5 H3 Z" stroke="#8b8b88" strokeWidth="1.8" fill="#ececec" />
        <rect x="18.5" y="20" width="11.5" height="12" rx="2" fill="#5b9a5b" /><path d="M24.2 22.5 V29.5 M20.7 26 H27.7" stroke="#fff" strokeWidth="2.2" />
      </Small>
      <Refresh32 />
      <Funnel />
      <TreeArrow up />
      <Small>
        <circle cx="15.5" cy="16" r="12.7" fill="#6d97c4" stroke="#415a75" strokeWidth="1.3" />
        <text x="15" y="24" textAnchor="middle" fontFamily="Liberation Serif" fontStyle="italic" fontWeight="700" fontSize="24" fill="#fff">i</text>
      </Small>
    </div>
    <div className="flex h-[542px] shrink-0 border-t-2 border-[#b5b5b5] bg-white">
      <div className="flex-1 overflow-hidden">
        {FILES.map(([name, track], i) => (
          <div key={name} className={`flex h-9 items-center pl-[208px] ${i === 1 ? "bg-[#dcdcdc]" : ""}`}>
            <Raster faded={i === 1} />
            <span className={`ml-[14.5px] pt-[2px] text-[25px] whitespace-nowrap text-black ${track}`}>{name}</span>
          </div>
        ))}
      </div>
      <VScroll top="h-[87px]" thumb="h-[56px]" rest="flex-1" down="h-[30px]" />
    </div>
    <div className="flex h-[29px] shrink-0 border-y border-[#b5b5b5]">
      <div className="flex w-6 items-center justify-center border-r-2 border-[#c4c4c4] bg-white"><span className="block h-0 w-0 border-y-[7.5px] border-r-[8.5px] border-y-transparent border-r-[#555]" /></div>
      <div className="w-[703px] bg-gradient-to-b from-white to-[#f1f1f1]" />
      <div className="w-[34px] border-x-2 border-[#c0c0c0] bg-[#e3e3e3]" />
      <div className="flex w-[27px] items-center justify-center bg-white"><span className="block h-0 w-0 border-y-[7.5px] border-l-[8.5px] border-y-transparent border-l-[#555]" /></div>
      <div className="flex-1 border-x border-[#b5b5b5] bg-[#ebebeb]" />
    </div>
    <div className="mt-[2px] flex h-[53px] shrink-0 items-start text-[25px] text-[#262626]">
      <div className="flex h-[49px] w-[158px] items-center justify-center rounded-br-[5px] border-t-2 border-r-2 border-b-2 border-[#b5b5b5] bg-[#d9d9d9] pt-[5px] pr-[4px] tracking-[0.4px]">Statistics</div>
      <div className="flex h-[49px] w-[279px] items-center justify-center rounded-b-[5px] border-t-2 border-b-2 border-[#b5b5b5] bg-[#d9d9d9] pt-[5px] pr-[2px]">Processing Toolbox</div>
      <div className="flex h-[53px] w-[147px] items-center justify-center rounded-b-[5px] border-x-2 border-b-2 border-[#a8a8a8] bg-[#f5f5f5] pt-[7px] tracking-[0.3px]">Browser</div>
      <div className="h-0 flex-1 border-t-2 border-[#b5b5b5]" />
    </div>
    <div className="flex h-[11px] shrink-0 items-center gap-[4px] pt-[3px] pl-[394px]">
      {[0, 1, 2, 3, 4, 5].map((i) => <span key={i} className="h-[2px] w-[2px] bg-[#b5b5b5]" />)}
    </div>
  </>
);

type Row =
  | { kind: "class"; value: string }
  | { kind: "layer"; name: string; track: string; on?: boolean };

const ROWS: Row[] = [
  { kind: "class", value: "1" },
  { kind: "layer", name: "06_ffTreeCanopyGood", track: "tracking-[0.54px]" },
  { kind: "class", value: "0" },
  { kind: "class", value: "1" },
  { kind: "layer", name: "ffCurrent", track: "tracking-[0.4px]" },
  { kind: "class", value: "0" },
  { kind: "class", value: "1" },
  { kind: "layer", name: "ffHistoric", track: "tracking-[0.88px]", on: true },
  { kind: "class", value: "0" },
  { kind: "class", value: "1" },
  { kind: "layer", name: "_buildingBuffer", track: "tracking-[0.52px]" },
];

const Check = () => (
  <svg viewBox="0 0 24 24" className="h-6 w-6" fill="none"><path d="M5.5 12.5 L10.5 19 L18 4" stroke="#222" strokeWidth="2.8" strokeLinecap="round" strokeLinejoin="round" /></svg>
);

const LayerRow = ({ row }: { row: Row }) => {
  if (row.kind === "class")
    return (
      <div className="flex h-9 shrink-0 items-center pl-[84px] text-[25px] text-black">
        <span className={`mt-[2px] h-8 w-8 ${row.value === "1" ? "bg-black" : ""}`} />
        <span className="ml-[12.5px] pt-[2px]">{row.value}</span>
      </div>
    );
  return (
    <div className={`flex h-9 shrink-0 items-center pl-[10.5px] ${row.on ? "bg-[#0062e1]" : ""}`}>
      <Down className={row.on ? "border-t-[#0a2b5c]" : "border-t-[#555]"} />
      <span className="ml-[18.5px] flex h-7 w-7 items-center justify-center border-2 border-[#b9b9b9] bg-white">{row.on && <Check />}</span>
      <span className="ml-[16px] pt-px"><Raster faded={row.on} /></span>
      {row.on ? (
        <span className="ml-[9px] flex h-9 flex-1 items-center bg-gradient-to-b from-[#1c72e8] to-[#0565e4] pt-[4px] pl-[5.5px]">
          <span className={`border-b-[3px] border-white text-[25px] leading-[28px] font-bold text-white ${row.track}`}>{row.name}</span>
        </span>
      ) : (
        <span className={`ml-[17px] pt-[2px] text-[25px] font-bold text-[#808080] italic ${row.track}`}>{row.name}</span>
      )}
    </div>
  );
};

const LayersDock = () => (
  <>
    <DockHeader title="Layers" track="tracking-[0.25px]" />
    <div className="flex h-[58px] shrink-0 items-start pt-[10px] pl-[12px]">
      <Small>
        <path d="M6 5 L18 9 L15 13 L5 10 Z" fill="#fce94f" /><path d="M5 10 L16 14 L13 20 L3 17 Z" fill="#7ba4d6" /><path d="M3 17 L13 20 L11 26 L1.5 22 Z" fill="#ef2929" />
        <path d="M20 15 L29 5" stroke="#b87a2a" strokeWidth="3.6" strokeLinecap="round" />
        <path d="M14 12 L23 19.5 L17 28.5 L9 25.5 Z" fill="#d9a557" stroke="#a8742c" strokeWidth="1.2" />
      </Small>
      <div className="ml-[18px]">
        <Small>
          <path d="M2.8 18.5 V29.5 H17" stroke="#8b8b88" strokeWidth="1.8" /><rect x="6.7" y="8.7" width="17" height="15.5" fill="#ececec" stroke="#8b8b88" strokeWidth="1.8" /><rect x="10.7" y="4.7" width="17" height="15.5" fill="#ececec" stroke="#8b8b88" strokeWidth="1.8" />
          <path d="M18.5 4 V18 M15.5 8 V4 Q15.5 1.3 17.5 1.3 Q19.5 1.3 19.5 4 V18 Q19 21 17 21 Q15 21 15 18 V11" stroke="#415a75" strokeWidth="1.5" />
          <rect x="18.5" y="20" width="11.5" height="12" rx="2" fill="#5b9a5b" /><path d="M24.2 22.5 V29.5 M20.7 26 H27.7" stroke="#fff" strokeWidth="2.2" />
        </Small>
      </div>
      <div className="relative ml-[18px]">
        <Small>
          <path d="M1.5 18 Q7 8.5 16 8.5 Q25 8.5 31 19 Q24 27 16 27 Q8 27 1.5 18 Z" fill="#f4f4f4" stroke="#8b8b88" strokeWidth="1.5" /><path d="M1.5 9 Q15 2 29 9" stroke="#8b8b88" strokeWidth="1.3" />
          <circle cx="15.7" cy="16.7" r="7.6" fill="#729fcf" stroke="#3e6496" strokeWidth="1.3" /><circle cx="15.7" cy="16.5" r="3.3" fill="#111" /><circle cx="14.3" cy="14" r="1.5" fill="#fff" />
        </Small>
        <span className="absolute -right-[4px] -bottom-[1px] block h-0 w-0 border-x-[5.5px] border-t-[6px] border-x-transparent border-t-[#555]" />
      </div>
      <div className="ml-[18px]"><Funnel /></div>
      <div className="ml-[20px]">
        <Small>
          <text transform="translate(1 20.5) scale(1.05 1.2)" fontFamily="Liberation Serif" fontSize="38" fill="#b9b9b9">ε</text>
          <path d="M15.5 18 H30 V21 L26.5 24 V31.5 L19 31.5 V24 L15.5 21 Z" fill="#d4d4d4" /><path d="M17 19.5 H28.5 M21 24 V31 L24.5 29 V24" stroke="#f2f2f2" strokeWidth="2" />
        </Small>
      </div>
      <div className="ml-[10.5px] flex h-8 items-center pt-[2px]"><Down /></div>
      <div className="ml-[16.5px]"><TreeArrow /></div>
      <div className="ml-[18px]"><TreeArrow up /></div>
      <div className="ml-[17.5px]">
        <Small><rect x="3" y="3" width="22.5" height="22" stroke="#8b8b88" strokeWidth="1.8" /><rect x="18" y="20" width="12" height="10.5" rx="2" fill="#ef4a4a" /><path d="M20.5 25.2 H27.5" stroke="#fff" strokeWidth="2.8" /></Small>
      </div>
    </div>
    <div className="flex min-h-0 flex-1 border-t-2 border-b border-[#b5b5b5] bg-white">
      <div className="flex flex-1 flex-col overflow-hidden">{ROWS.map((row, i) => <LayerRow key={i} row={row} />)}</div>
      <VScroll top="h-[126px]" thumb="h-[56px]" rest="flex-1" down="h-[30px]" />
    </div>
  </>
);

/* ---------- map canvas ---------- */

const SHAPES = [
  "1546,368 1586,368 1592,377 1592,388 1582,384 1570,383 1563,379 1553,374",
  "1534,384 1542,390 1553,397 1577,408 1602,418 1613,420 1618,425 1618,444 1610,457 1599,472 1592,478 1584,485 1573,501 1560,519 1554,533 1550,545 1548,554 1548,562 1550,570 1555,584 1565,600 1580,613 1597,626 1614,638 1633,643 1653,652 1666,655 1683,670 1690,682 1694,696 1694,750 1688,771 1682,795 1675,814 1667,834 1648,870 1633,891 1626,900 1615,916 1603,936 1583,958 1563,982 1547,1008 1538,1029 1536,1054 1536,1079 1538,1114 1544,1150 1548,1186 1553,1217 1556,1248 1558,1254 1543,1256 1528,1262 1515,1273 1497,1298 1480,1320 1468,1338 1460,1342 1453,1340 1447,1332 1436,1312 1436,1306 1450,1301 1470,1293 1487,1281 1495,1257 1503,1228 1508,1199 1512,1181 1512,1134 1507,1114 1502,1092 1497,1056 1493,1020 1490,983 1488,976 1497,966 1499,958 1499,931 1498,914 1496,895 1493,882 1488,876 1500,865 1510,847 1514,838 1508,816 1505,795 1504,753 1501,719 1498,717 1522,697 1524,684 1524,644 1534,621 1535,593 1539,560 1540,524 1540,482 1537,470 1528,455 1524,445 1524,430 1529,413 1532,390",
  "1638,446 1653,448 1663,455 1666,460 1666,480 1662,495 1662,508 1668,527 1677,558 1686,593 1693,623 1698,650 1700,668 1690,654 1677,644 1657,635 1637,626 1613,610 1593,597 1580,584 1567,564 1567,547 1570,538 1587,511 1600,499 1620,482 1630,464",
  "1628,936 1633,938 1636,954 1636,985 1632,1005 1620,1032 1605,1056 1598,1071 1603,1092 1608,1105 1607,1132 1604,1159 1606,1199 1610,1220 1617,1224 1622,1217 1628,1201 1630,1150 1633,1101 1635,1043 1639,1012 1649,976 1655,940 1662,922 1670,922 1678,928 1683,945 1677,989 1670,1029 1667,1079 1667,1110 1669,1159 1673,1190 1676,1220 1702,1220 1700,1235 1712,1270 1723,1306 1733,1346 1743,1391 1749,1431 1752,1467 1748,1489 1740,1512 1740,1533 1745,1536 1757,1538 1767,1537 1773,1532 1783,1533 1787,1556 1790,1580 1752,1580 1733,1555 1717,1532 1703,1516 1683,1503 1667,1496 1653,1493 1600,1491 1582,1482 1580,1471 1583,1449 1584,1404 1582,1346 1580,1257 1577,1230 1572,1190 1562,1137 1557,1101 1554,1070 1554,1050 1561,1027 1567,1014 1582,991 1603,969 1617,951",
  "1557,1262 1560,1273 1561,1288 1564,1295 1564,1382 1566,1391 1566,1449 1563,1478 1565,1491 1576,1505 1612,1507 1650,1510 1667,1518 1688,1530 1710,1552 1731,1580 1592,1580 1590,1561 1585,1534 1578,1520 1570,1516 1561,1520 1553,1519 1548,1507 1543,1480 1540,1442 1537,1404 1533,1364 1528,1355 1502,1355 1502,1352 1527,1330 1537,1315 1547,1293 1553,1267",
];

const CELL = 2;

/** Fills a polygon with square raster cells, one run of cells per scan line. */
function rasterise(points: string): string {
  const pts = points.split(" ").map((p) => p.split(",").map(Number));
  const ys = pts.map((p) => p[1]);
  const top = Math.floor(Math.min(...ys) / CELL) * CELL;
  const bottom = Math.max(...ys);
  let d = "";
  for (let y = top; y < bottom; y += CELL) {
    const mid = y + CELL / 2;
    const xs: number[] = [];
    pts.forEach(([x1, y1], i) => {
      const [x2, y2] = pts[(i + 1) % pts.length];
      if (y1 <= mid !== y2 <= mid) xs.push(x1 + ((mid - y1) / (y2 - y1)) * (x2 - x1));
    });
    xs.sort((a, b) => a - b);
    for (let i = 0; i + 1 < xs.length; i += 2) {
      const a = Math.round(xs[i] / CELL) * CELL;
      const b = Math.round(xs[i + 1] / CELL) * CELL;
      if (b > a) d += `M${a} ${y}H${b}V${y + CELL}H${a}Z`;
    }
  }
  return d;
}

const PATHS = SHAPES.map(rasterise);

const MapCanvas = () => (
  <div className="mt-[3px] min-w-0 flex-1 overflow-hidden border border-[#b0b0b0] bg-white">
    <svg viewBox="831 353 1604 1225" className="block h-[1225px] w-[1604px]" shapeRendering="crispEdges">
      {PATHS.map((d, i) => <path key={i} d={d} fill="#000" />)}
    </svg>
  </div>
);

/* ---------- status bar ---------- */

const Field = ({ children, className = "" }: Kids & { className?: string }) => (
  <div className={`flex shrink-0 overflow-hidden rounded-[5px] border-2 border-[#a8a8a8] bg-gradient-to-b from-white to-[#f2f2f2] ${className}`}>{children}</div>
);

const Steps = () => (
  <div className="flex w-[28px] flex-col items-center justify-center gap-[9px] border-l-2 border-[#a8a8a8]"><Up /><Down /></div>
);

const StatusBar = () => (
  <div className="flex h-[61px] shrink-0 items-center bg-gradient-to-b from-[#ececec] to-[#d9d9d9] text-[21.5px] whitespace-nowrap text-[#1a1a1a]">
    <Field className="ml-[4px] h-[49px] w-[424px] items-center">
      <svg viewBox="0 0 26 26" className="ml-[15px] h-[26px] w-[26px]" fill="none" stroke="#7f7f7f" strokeWidth="2.2"><circle cx="11" cy="10.5" r="8.7" /><path d="M17.5 17 L24 24.5" strokeWidth="3" /></svg>
      <span className="ml-[15px] pt-[3px] text-[25px] tracking-[0.13px] text-[#7f7f7f]">Type to locate (⌘K)</span>
    </Field>
    <span className="ml-[253.5px] w-[122.5px] pt-[4px] tracking-[0.42px]">Coordinate</span>
    <Field className="h-[44px] w-[200px] items-center justify-center pt-[4px] pr-[2px] tracking-[0.7px] text-black">446876,167513</Field>
    <div className="flex w-12 justify-center">
      <svg viewBox="0 0 32 32" className="h-8 w-8" fill="none">
        <path d="M12 19 Q10 27 16 30.5 Q24 33 28 26 Q31 18 25 14 Z" fill="#bcaeae" />
        <path d="M3 6 Q9 -1 15 3 L20 14 Q26 18 24 25 Q20 33 13 30 Q7 27 9 20 L3 12 Z" fill="#fff" stroke="#000" strokeWidth="2.2" />
        <path d="M5 5 L10 17 M9 2.5 L13 14 M13.5 3 L16 13" stroke="#000" strokeWidth="2.6" /><path d="M6 20 Q14 19 21 11" stroke="#000" strokeWidth="3" />
        <circle cx="17.5" cy="24" r="2.8" stroke="#000" strokeWidth="2" />
        <path d="M20 7 L23 4.5 M25 8 H28 M26 2.5 L29 1 M1 20 L3 19" stroke="#000" strokeWidth="1.8" />
      </svg>
    </div>
    <span className="ml-[18px] w-[65px] pt-[3px] tracking-[0.28px]">Scale</span>
    <Field className="h-[48px] w-[186px] text-black">
      <span className="flex flex-1 items-center pt-[2px] pl-[4px] tracking-[0.62px]">1:21402</span>
      <span className="flex w-[40px] items-center justify-center border-l border-[#b5b5b5]"><Down /></span>
    </Field>
    <svg viewBox="0 0 32 32" className="ml-[21px] h-8 w-8" fill="none">
      <path d="M8.5 16 V10 Q8.5 3 16 3 Q23.5 3 23.5 10 V16" stroke="#8b8b8b" strokeWidth="4" /><path d="M8.5 16 V10 Q8.5 3 16 3 Q23.5 3 23.5 10 V16" stroke="#f2f2f2" strokeWidth="1.3" />
      <rect x="4" y="15" width="24" height="16" rx="1.5" fill="#555" />
    </svg>
    <span className="ml-[13.5px] w-[105.5px] pt-[4px]">Magnifier</span>
    <Field className="h-[46px] w-[177px] text-black">
      <span className="flex flex-1 items-center pt-[3px] pl-[6px] font-medium tracking-[0.3px]">100%</span>
      <Steps />
    </Field>
    <span className="ml-[18px] w-[107px] pt-[4px] tracking-[0.42px]">Rotation</span>
    <Field className="h-[44px] w-[181px] text-black">
      <span className="flex flex-1 items-center pt-[3px] pl-[7px] font-medium tracking-[-0.2px]">0.0 °</span>
      <Steps />
    </Field>
    <span className="ml-[12px] flex h-7 w-7 items-center justify-center border-2 border-[#b5b5b5] bg-white"><Check /></span>
    <span className="ml-[10px] w-[106px] pt-[4px]">Render</span>
    <svg viewBox="0 0 32 32" className="h-8 w-8" fill="none" stroke="#6b6b6b" strokeWidth="1.5">
      <path d="M8 3 H24 L29 15 Q29 29 16 29.5 Q3 29 3 15 Z" />
      <path d="M8 3 H24 L29 12 L31 17 Q16 22 1 17 L3 12 Z" fill="#8f8f8f" />
      <path d="M12 3 L9.5 18 Q11 27 16 29.5 Q21 27 22.5 18 L20 3 M16 3 V29 M5 9 Q16 12 27 9 M3 13 Q16 17 29 13 M5 24 Q16 27 27 24" stroke="#5b5b5b" />
      <path d="M7 8 L10 8 M14 8 H18 M22 8 H25 M6 14 H9 M14 15.5 H18 M23 14 H26" stroke="#e8e8e8" strokeWidth="2" />
    </svg>
    <span className="ml-[4.5px] w-[176.5px] pt-[4px] tracking-[0.4px] text-[#333]">EPSG:32145</span>
    <svg viewBox="0 0 32 32" className="-ml-px h-8 w-8">
      <path d="M16 2 Q32 3 32 15 Q32 20 27.5 24 Q27.5 28.5 30 31 Q24 31 20.5 27 Q0 29 0 15 Q0 3 16 2 Z" fill="#5e5e5e" />
      <circle cx="8.5" cy="15" r="2.3" fill="#fff" /><circle cx="16" cy="15" r="2.3" fill="#fff" /><circle cx="23.5" cy="15" r="2.3" fill="#fff" />
    </svg>
    <svg viewBox="0 0 24 24" className="mr-[3px] mb-[2px] ml-auto h-6 w-6 self-end" fill="#b0b0b0">
      <path d="M19 0 h2 v2 h-2 Z M13 6 h2 v2 h-2 Z M19 6 h2 v2 h-2 Z M7 12 h2 v2 h-2 Z M13 12 h2 v2 h-2 Z M19 12 h2 v2 h-2 Z M1 18 h2 v2 h-2 Z M7 18 h2 v2 h-2 Z M13 18 h2 v2 h-2 Z M19 18 h2 v2 h-2 Z" />
    </svg>
  </div>
);

export default function App() {
  return (
    <div className="h-[1640px] w-[2438px] overflow-hidden bg-[#1b1c26] pr-[2px] font-['Inter',sans-serif]">
      <div className="flex h-full flex-col overflow-hidden rounded-br-[10px] bg-[#ebebeb]">
        <div className="relative flex h-10 shrink-0 items-center justify-center border-b border-[#a6a6a6] bg-gradient-to-b from-[#e3e3e3] to-[#cbcbcb] text-[25px] tracking-[0.4px] text-[#484848]">
          <div className="absolute top-[6px] left-[12px] flex gap-4">
            <span className="h-6 w-6 rounded-full border border-[#dd5046] bg-[#ed6a5f]" />
            <span className="h-6 w-6 rounded-full border border-[#dca13a] bg-[#f5bf4f]" />
            <span className="h-6 w-6 rounded-full border border-[#4fa73f] bg-[#62c554]" />
          </div>
          <span className="ml-[-5px]">*Untitled Project — QGIS</span>
        </div>
        <MainToolbar />
        <EditToolbar />
        <SnapToolbar />
        <SelectToolbar />
        <div className="flex min-h-0 flex-1">
          <div className="flex w-[817px] shrink-0 flex-col">
            <BrowserDock />
            <LayersDock />
          </div>
          <div className="flex w-[13px] shrink-0 flex-col items-center gap-[4px] pt-[603px]">
            {[0, 1, 2, 3, 4, 5].map((i) => <span key={i} className="h-[2px] w-[2px] shrink-0 bg-[#b5b5b5]" />)}
          </div>
          <MapCanvas />
        </div>
        <StatusBar />
      </div>
    </div>
  );
}
